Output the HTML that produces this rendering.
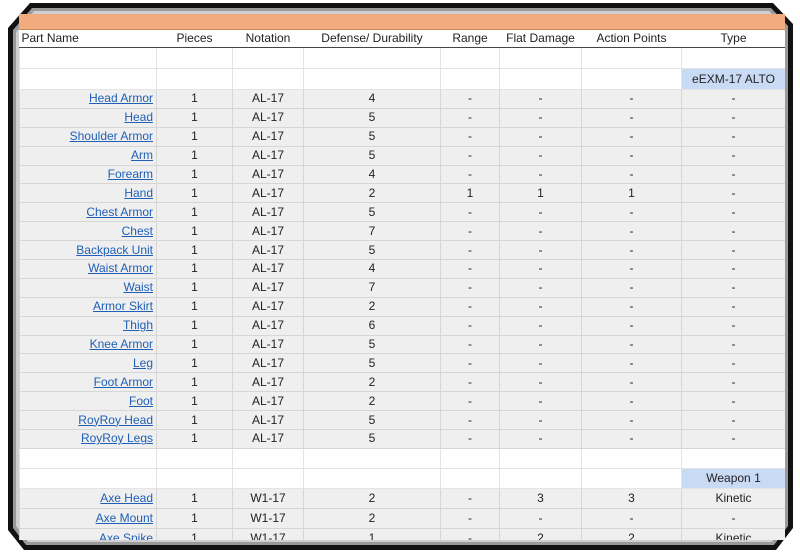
<!DOCTYPE html>
<html><head><meta charset="utf-8"><style>
body{margin:0;width:800px;height:552px;background:#fff;overflow:hidden;position:relative;font-family:"Liberation Sans",sans-serif;}
#frame{position:absolute;left:0;top:0}
#wrap{position:absolute;left:19px;top:14px;width:766px;height:526px;overflow:hidden;background:#fff}
.bar{position:absolute;left:0;top:0;width:766px;height:15px;background:#f2ab7f;border-bottom:1px solid #c98a60}
table{position:absolute;left:0;top:16px;border-collapse:collapse;table-layout:fixed;width:766px;font-size:12px;color:#222}
td{border:1px solid #d6d6d6;padding:0 2px;height:17.9px;text-align:center;white-space:nowrap;overflow:hidden;line-height:17px}
tr.h td{height:16px;border:none;border-bottom:1px solid #444;background:#fff}
tr.h td.l{text-align:left}
tr.b td{height:20px;background:#fff;border-color:#e4e4e4}
tr.b2 td{height:19px}
tr.d td{background:#efefef}
tr.w td{height:19px}
td.n{text-align:right;padding-right:3px}
td.n a{color:#1f5fb5;text-decoration:underline}
td.t{background:#c9daf5!important;color:#222}
</style></head><body>
<svg id="frame" width="800" height="552">
<polygon points="8,28 30,3 773,3 793,24 793,528 776,550 24,550 8,530" fill="#111"/>
<polygon points="13,30 32,8 771,8 788,26 788,526 774,545 26,545 13,528" fill="#9a9a9a"/>
<polygon points="16,32 34,11 769,11 785,28 785,524 772,542 28,542 16,526" fill="#cfcfcf"/>
</svg>
<div id="wrap">
<div class="bar"></div>
<table>
<colgroup><col style="width:137px"><col style="width:76px"><col style="width:71px"><col style="width:137px"><col style="width:59px"><col style="width:82px"><col style="width:100px"><col style="width:104px"></colgroup>
<tr class="h"><td class="l">Part Name</td><td>Pieces</td><td>Notation</td><td>Defense/ Durability</td><td>Range</td><td>Flat Damage</td><td>Action Points</td><td>Type</td></tr>
<tr class="b"><td></td><td></td><td></td><td></td><td></td><td></td><td></td><td></td></tr>
<tr class="b"><td></td><td></td><td></td><td></td><td></td><td></td><td></td><td class="t">eEXM-17 ALTO</td></tr>
<tr class="d"><td class="n"><a>Head Armor</a></td><td>1</td><td>AL-17</td><td>4</td><td>-</td><td>-</td><td>-</td><td>-</td></tr>
<tr class="d"><td class="n"><a>Head</a></td><td>1</td><td>AL-17</td><td>5</td><td>-</td><td>-</td><td>-</td><td>-</td></tr>
<tr class="d"><td class="n"><a>Shoulder Armor</a></td><td>1</td><td>AL-17</td><td>5</td><td>-</td><td>-</td><td>-</td><td>-</td></tr>
<tr class="d"><td class="n"><a>Arm</a></td><td>1</td><td>AL-17</td><td>5</td><td>-</td><td>-</td><td>-</td><td>-</td></tr>
<tr class="d"><td class="n"><a>Forearm</a></td><td>1</td><td>AL-17</td><td>4</td><td>-</td><td>-</td><td>-</td><td>-</td></tr>
<tr class="d"><td class="n"><a>Hand</a></td><td>1</td><td>AL-17</td><td>2</td><td>1</td><td>1</td><td>1</td><td>-</td></tr>
<tr class="d"><td class="n"><a>Chest Armor</a></td><td>1</td><td>AL-17</td><td>5</td><td>-</td><td>-</td><td>-</td><td>-</td></tr>
<tr class="d"><td class="n"><a>Chest</a></td><td>1</td><td>AL-17</td><td>7</td><td>-</td><td>-</td><td>-</td><td>-</td></tr>
<tr class="d"><td class="n"><a>Backpack Unit</a></td><td>1</td><td>AL-17</td><td>5</td><td>-</td><td>-</td><td>-</td><td>-</td></tr>
<tr class="d"><td class="n"><a>Waist Armor</a></td><td>1</td><td>AL-17</td><td>4</td><td>-</td><td>-</td><td>-</td><td>-</td></tr>
<tr class="d"><td class="n"><a>Waist</a></td><td>1</td><td>AL-17</td><td>7</td><td>-</td><td>-</td><td>-</td><td>-</td></tr>
<tr class="d"><td class="n"><a>Armor Skirt</a></td><td>1</td><td>AL-17</td><td>2</td><td>-</td><td>-</td><td>-</td><td>-</td></tr>
<tr class="d"><td class="n"><a>Thigh</a></td><td>1</td><td>AL-17</td><td>6</td><td>-</td><td>-</td><td>-</td><td>-</td></tr>
<tr class="d"><td class="n"><a>Knee Armor</a></td><td>1</td><td>AL-17</td><td>5</td><td>-</td><td>-</td><td>-</td><td>-</td></tr>
<tr class="d"><td class="n"><a>Leg</a></td><td>1</td><td>AL-17</td><td>5</td><td>-</td><td>-</td><td>-</td><td>-</td></tr>
<tr class="d"><td class="n"><a>Foot Armor</a></td><td>1</td><td>AL-17</td><td>2</td><td>-</td><td>-</td><td>-</td><td>-</td></tr>
<tr class="d"><td class="n"><a>Foot</a></td><td>1</td><td>AL-17</td><td>2</td><td>-</td><td>-</td><td>-</td><td>-</td></tr>
<tr class="d"><td class="n"><a>RoyRoy Head</a></td><td>1</td><td>AL-17</td><td>5</td><td>-</td><td>-</td><td>-</td><td>-</td></tr>
<tr class="d"><td class="n"><a>RoyRoy Legs</a></td><td>1</td><td>AL-17</td><td>5</td><td>-</td><td>-</td><td>-</td><td>-</td></tr>
<tr class="b b2"><td></td><td></td><td></td><td></td><td></td><td></td><td></td><td></td></tr>
<tr class="b b2"><td></td><td></td><td></td><td></td><td></td><td></td><td></td><td class="t">Weapon 1</td></tr>
<tr class="d w"><td class="n"><a>Axe Head</a></td><td>1</td><td>W1-17</td><td>2</td><td>-</td><td>3</td><td>3</td><td>Kinetic</td></tr>
<tr class="d w"><td class="n"><a>Axe Mount</a></td><td>1</td><td>W1-17</td><td>2</td><td>-</td><td>-</td><td>-</td><td>-</td></tr>
<tr class="d w"><td class="n"><a>Axe Spike</a></td><td>1</td><td>W1-17</td><td>1</td><td>-</td><td>2</td><td>2</td><td>Kinetic</td></tr>
</table>
</div>
</body></html>
